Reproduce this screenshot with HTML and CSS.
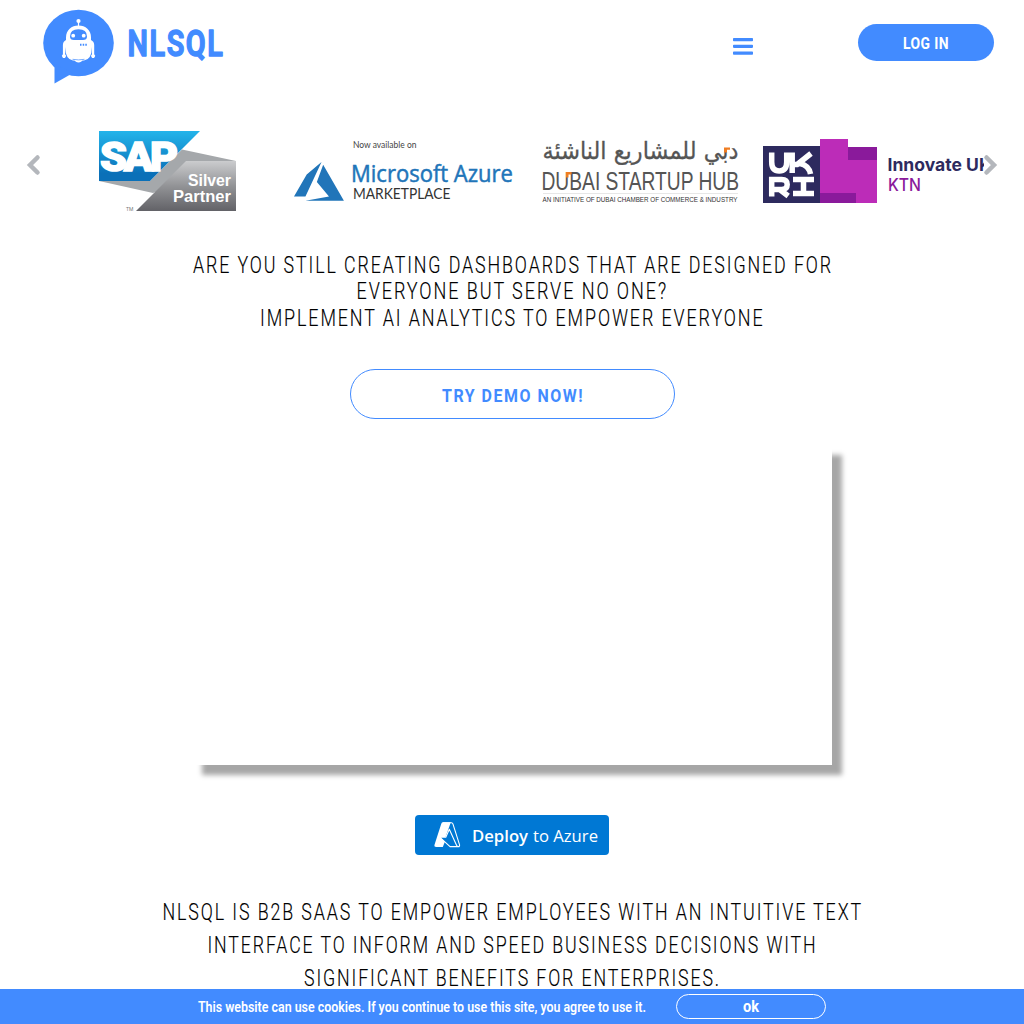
FILE: index.html
```html
<!DOCTYPE html>
<html lang="en">
<head>
<meta charset="utf-8">
<title>NLSQL</title>
<link rel="stylesheet" href="styles.css">
</head>
<body>
<header class="header">
  <svg class="brand" viewBox="40 8 190 78">
    <ellipse class="accent" cx="78.5" cy="43" rx="35.3" ry="33.2"/>
    <path class="accent" d="M54.5 64V83.5L73 73z"/>
    <g fill="#fff">
      <circle cx="78.5" cy="21" r="2.1"/><rect x="77.9" y="21" width="1.2" height="6"/>
      <path d="M66 40v-2.5C66 30 71.500 25.500 78.500 25.500S91 30 91 37.500V40q3.200 1.500 3.200 5v9.200a2 2 0 1 1-2.200 0V47q-.3 12.500-8 13.500H73Q65.500 59.500 65.100 47v7.200a2 2 0 1 1-2.200 0V45q0-3.500 3.100-5z"/>
      <path d="M74 59.500h9q-1.500 3-4.500 3T74 59.500z"/>
    </g>
    <path class="accent" d="M70 36.500q0-7.300 8.500-7.300T87 36.500q0 3.500-4 3.500h-9q-4 0-4-3.500zM80 43.700h1.500v2H80zM82.700 43.700h1.500v2h-1.500zM85.300 43.700h1.500v2h-1.500z"/>
    <circle cx="73.200" cy="35.700" r="1.900" fill="#fff"/><circle cx="83.700" cy="35.700" r="1.900" fill="#fff"/>
    <path d="M72.500 59.300q6 1.200 12 0" fill="none" stroke="#428bff" stroke-width=".7"/>
    <text class="brand-name" x="127.500" y="56.300" textLength="97" lengthAdjust="spacingAndGlyphs">NLSQL</text>
  </svg>
  <svg class="menu" viewBox="0 0 20 17"><path class="accent" d="M.8 0h18.400q.8 0 .8.800v1.700q0 .8-.8.800H.8q-.8 0-.8-.8V.8Q0 0 .8 0zm0 6.700h18.400q.8 0 .8.800v1.600q0 .8-.8.800H.8q-.8 0-.8-.8V7.500q0-.8.8-.8zm0 6.700h18.400q.8 0 .8.800v1.700q0 .8-.8.800H.8q-.8 0-.8-.8v-1.700q0-.8.8-.8z"/></svg>
  <a class="login"><svg viewBox="0 0 46 20"><text x="0" y="15.500" textLength="46" lengthAdjust="spacingAndGlyphs">LOG IN</text></svg></a>
</header>

<section class="carousel">
  <svg class="arrow" viewBox="0 0 14 20"><path d="M11.500 2.500L4 10l7.500 7.500"/></svg>
  <svg class="sap" viewBox="0 0 137 80">
    <defs>
      <linearGradient id="blue" x2="0" y2="1"><stop stop-color="#23b4ea"/><stop offset=".85" stop-color="#0a70b8"/></linearGradient>
      <linearGradient id="silver" x2="0" y2="1"><stop stop-color="#cbccce"/><stop offset=".5" stop-color="#929396"/><stop offset="1" stop-color="#626267"/></linearGradient>
    </defs>
    <path fill="#a5a8ab" d="M0 50h51l32-31.500 54 11.500-83 32z"/>
    <path fill="url(#silver)" d="M87 30h50v50H37z"/>
    <path fill="url(#blue)" d="M0 0h101L51 50H0z"/>
    <text class="sap-name" x="1" y="39.500" textLength="75" lengthAdjust="spacingAndGlyphs">SAP</text>
    <text class="sap-tier" x="89" y="55" textLength="43" lengthAdjust="spacingAndGlyphs">Silver</text>
    <text class="sap-tier" x="74" y="71" textLength="58" lengthAdjust="spacingAndGlyphs">Partner</text>
    <text x="27" y="80" font-size="5" fill="#777">TM</text>
  </svg>
  <svg class="azure" viewBox="290 131 225 80">
    <path transform="translate(294 156.400) scale(2.080)" fill="#2175b9" d="M5.483 21.300H24L14.025 4.013l-3.038 8.347 5.836 6.938L5.483 21.300zM13.230 2.700L6.105 8.677 0 19.253h5.505v.014L13.230 2.700z"/>
    <text x="353" y="147.500" font-size="8.500" fill="#444" textLength="63.500" lengthAdjust="spacingAndGlyphs">Now available on</text>
    <text class="azure-name" x="351" y="182" textLength="162" lengthAdjust="spacingAndGlyphs">Microsoft Azure</text>
    <text class="azure-sub" x="353" y="199" textLength="97.500" lengthAdjust="spacingAndGlyphs">MARKETPLACE</text>
  </svg>
  <svg class="dubai" viewBox="540 131 200 80">
    <text class="arabic" x="542.500" y="158.500" textLength="196" lengthAdjust="spacingAndGlyphs">دبي للمشاريع الناشئة</text>
    <path d="M724 147.500h6v2.300h-3v2.700h-3z" fill="#ef7d22"/>
    <text class="hub" x="541.500" y="189.500" textLength="197.500" lengthAdjust="spacingAndGlyphs">DUBAI STARTUP HUB</text>
    <path d="M566 172h5.500v2.500h-3v3H566z" fill="#ef7d22"/>
    <path d="M543 193.500h195" stroke="#ddd" stroke-width=".7"/>
    <text class="hub-sub" x="542.500" y="202.300" textLength="195" lengthAdjust="spacingAndGlyphs">AN INITIATIVE OF DUBAI CHAMBER OF COMMERCE &amp; INDUSTRY</text>
  </svg>
  <svg class="ukri" viewBox="763 131 221 80">
    <path fill="#2d2a5e" d="M763 146h57v57h-57z"/>
    <path fill="#bc2cb8" d="M820 139h28v8h29v56h-57z"/>
    <path fill="#8a1a9b" d="M848 147h29v13h-29zM820 193h36v10h-36z"/>
    <path fill="none" stroke="#fff" stroke-width="5.500" d="M771.700 152.500v9.500q0 9 7.500 9t7.500-9v-9.500m5.500 0v20.500m0-8.500h5L811 153.500m-11 10q9 2 10.500 10.500M771.700 196.500v-17h10q5.500 0 5.500 5t-5.500 5h-10m8 0l8.500 6.500M793 179.500h21m-10.500 0v14m-10.500 0h21"/>
    <text class="innovate" x="887.500" y="171" textLength="104" lengthAdjust="spacingAndGlyphs">Innovate UK</text>
    <text class="ktn" x="888" y="190.500" textLength="33" lengthAdjust="spacingAndGlyphs">KTN</text>
  </svg>
  <svg class="arrow next" viewBox="0 0 14 20"><path d="M2.500 2.500L10 10l-7.500 7.500"/></svg>
</section>

<main class="main">
  <svg class="headline light" viewBox="0 0 700 84">
    <text x="31" y="24.500" textLength="640" lengthAdjust="spacingAndGlyphs">ARE YOU STILL CREATING DASHBOARDS THAT ARE DESIGNED FOR</text>
    <text x="194.500" y="51" textLength="311.500" lengthAdjust="spacingAndGlyphs">EVERYONE BUT SERVE NO ONE?</text>
    <text x="98" y="77.500" textLength="504.500" lengthAdjust="spacingAndGlyphs">IMPLEMENT AI ANALYTICS TO EMPOWER EVERYONE</text>
  </svg>
  <a class="demo"><svg viewBox="0 0 142 24"><text x="0" y="19.500" textLength="142" lengthAdjust="spacingAndGlyphs">TRY DEMO NOW!</text></svg></a>
  <div class="video"></div>
  <a class="deploy">
    <svg viewBox="415 815 194 40">
      <path fill="#fff" d="M442.500 822.300h8.300l-3 8.500-2.300 6.300h-5.500l4.800 5-2 4.900h-6.500q-2.500 0-1.700-2.500l6.600-20.500q.5-1.700 1.300-1.700z"/>
      <path fill="none" stroke="#fff" stroke-width="1.100" stroke-linejoin="round" d="M443 822.700h8.500q1 0 1.400 1.200l6.600 20.700q.5 2-1.500 2h-8l-10-9.300h5.800l3.500-8 7 15.500q1 2.500 3.200 1.700"/>
      <text class="deploy-strong" x="472" y="842" textLength="56" lengthAdjust="spacingAndGlyphs">Deploy</text>
      <text class="deploy-rest" x="533" y="842" textLength="65" lengthAdjust="spacingAndGlyphs">to Azure</text>
    </svg>
  </a>
  <svg class="about light" viewBox="0 0 720 100">
    <text x="10.500" y="25" textLength="700.500" lengthAdjust="spacingAndGlyphs">NLSQL IS B2B SAAS TO EMPOWER EMPLOYEES WITH AN INTUITIVE TEXT</text>
    <text x="55.500" y="58" textLength="610" lengthAdjust="spacingAndGlyphs">INTERFACE TO INFORM AND SPEED BUSINESS DECISIONS WITH</text>
    <text x="152" y="91" textLength="417" lengthAdjust="spacingAndGlyphs">SIGNIFICANT BENEFITS FOR ENTERPRISES.</text>
  </svg>
</main>

<footer class="cookies">
  <svg class="cookie-text" viewBox="0 0 448 24"><text x="0" y="17" textLength="448" lengthAdjust="spacingAndGlyphs">This website can use cookies. If you continue to use this site, you agree to use it.</text></svg>
  <a class="ok"><svg viewBox="0 0 18 22"><text x="1" y="16" textLength="16" lengthAdjust="spacingAndGlyphs">ok</text></svg></a>
</footer>
</body>
</html>
```
FILE: styles.css
```css
* { box-sizing: border-box; }
html, body { margin: 0; height: 100%; overflow: hidden; }
body {
  display: flex;
  flex-direction: column;
  background: #fff;
  font-family: Roboto, "Liberation Sans", sans-serif;
}
svg { display: block; flex: none; overflow: visible; }
.accent { fill: #428bff; }

.header {
  display: flex;
  align-items: flex-start;
  height: 131px;
  flex: none;
  padding: 8px 30px 0 40px;
}
.brand { width: 190px; height: 78px; }
.brand-name {
  font-size: 36px;
  font-weight: 600;
  letter-spacing: 2px;
  fill: #428bff;
  stroke: #428bff;
  stroke-width: 1.400;
  stroke-linejoin: round;
}
.menu { width: 20px; height: 17px; margin: 29.500px 105px 0 auto; }
.login {
  display: flex;
  align-items: center;
  justify-content: center;
  width: 136px;
  height: 37px;
  margin-top: 16px;
  border-radius: 19px;
  background: #428bff;
}
.login svg { width: 46px; height: 20px; }
.login text { font-size: 16.500px; font-weight: 700; letter-spacing: .5px; fill: #fff; }

.carousel {
  display: flex;
  flex: none;
  height: 80px;
  padding-left: 26px;
}
.arrow { width: 14px; height: 20px; margin-top: 24px; }
.arrow path { fill: none; stroke: #b4b7bc; stroke-width: 4.500; stroke-linecap: round; }
.sap { width: 137px; height: 80px; margin-left: 59px; }
.sap-name {
  font: 900 41px Roboto, sans-serif;
  letter-spacing: -3px;
  fill: #fff;
  stroke: #fff;
  stroke-width: 1.500;
}
.sap-tier { font: 700 16.500px "Liberation Sans", sans-serif; fill: #fff; }
.azure { width: 225px; height: 80px; margin-left: 54px; }
.azure text { font-family: Lato, sans-serif; }
.azure .azure-name {
  font: 400 23.500px "Open Sans", sans-serif;
  fill: #2175b9;
  stroke: #2175b9;
  stroke-width: .5;
}
.azure-sub { font-size: 15.500px; fill: #333; }
.dubai { width: 200px; height: 80px; margin-left: 25px; }
.arabic { font: 24px "DejaVu Sans", sans-serif; fill: #555; stroke: #555; stroke-width: .3; }
.hub { font: 25px "Liberation Sans", sans-serif; fill: #555; }
.hub-sub { font: 6.500px "Liberation Sans", sans-serif; fill: #333; }
.ukri { width: 221px; height: 80px; margin-left: 23px; overflow: hidden; }
.innovate { font: 700 17.500px Inter, sans-serif; fill: #2d2a5e; }
.ktn { font: 500 17px Inter, sans-serif; fill: #8a1a9b; }

.main {
  display: flex;
  flex-direction: column;
  align-items: center;
}
.light {
  font-size: 23.500px;
  font-weight: 300;
  letter-spacing: 2.500px;
  fill: #000;
  stroke: #000;
  stroke-width: .15;
}
.headline { width: 700px; height: 84px; margin-top: 37px; }
.demo {
  display: flex;
  align-items: center;
  justify-content: center;
  width: 325px;
  height: 50px;
  margin: 37px 0 0 1px;
  border: 1px solid #428bff;
  border-radius: 25px;
}
.demo svg { width: 142px; height: 24px; }
.demo text { font-size: 19px; font-weight: 700; letter-spacing: 1.800px; fill: #428bff; }
.video {
  width: 640px;
  height: 320px;
  margin-top: 26px;
  background: #fff;
  box-shadow: 10px 10px 5px rgba(0, 0, 0, .35);
}
.deploy {
  width: 194px;
  height: 40px;
  margin-top: 50px;
  border-radius: 4px;
  background: #0078d4;
}
.deploy svg { width: 194px; height: 40px; }
.deploy text { font-family: "Open Sans", sans-serif; font-size: 17px; fill: #fff; }
.deploy .deploy-strong { font-weight: 600; }
.about { width: 720px; height: 100px; margin-top: 40px; }

.cookies {
  position: fixed;
  inset: auto 0 0;
  display: flex;
  align-items: center;
  justify-content: center;
  gap: 30px;
  height: 35px;
  background: #428bff;
}
.cookie-text { width: 448px; height: 24px; }
.cookies text { font-size: 14px; font-weight: 600; fill: #fff; }
.ok {
  display: flex;
  align-items: center;
  justify-content: center;
  width: 150px;
  height: 25px;
  border: 1px solid #fff;
  border-radius: 13px;
}
.ok svg { width: 18px; height: 22px; }
.ok text { font-size: 16px; font-weight: 700; }
```
